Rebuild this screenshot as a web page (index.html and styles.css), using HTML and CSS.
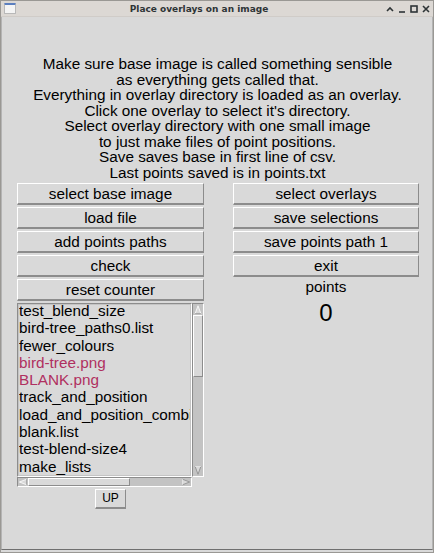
FILE: index.html
```html
<!DOCTYPE html>
<html>
<head>
<meta charset="utf-8">
<link rel="stylesheet" href="styles.css">
</head>
<body>
<div class="window">
  <div class="titlebar">
    <span class="appicon"></span>
    <span class="title">Place overlays on an image</span>
    <span class="controls">
      <svg width="10" height="10" viewBox="0 0 10 10"><path d="M2 7 L5 4 L8 7" fill="none" stroke="#2e3436" stroke-width="1.6"/></svg>
      <svg width="10" height="10" viewBox="0 0 10 10"><path d="M2 8 H8" stroke="#2e3436" stroke-width="1.6"/></svg>
      <svg width="10" height="10" viewBox="0 0 10 10"><rect x="2" y="2" width="6" height="6" fill="none" stroke="#2e3436" stroke-width="1.6"/></svg>
      <svg width="10" height="10" viewBox="0 0 10 10"><path d="M2 2 L8 8 M8 2 L2 8" stroke="#2e3436" stroke-width="1.6"/></svg>
    </span>
  </div>
  <div class="content">
    <div class="desc">Make sure base image is called something sensible<br>as everything gets called that.<br>Everything in overlay directory is loaded as an overlay.<br>Click one overlay to select it's directory.<br>Select overlay directory with one small image<br>to just make files of point positions.<br>Save saves base in first line of csv.<br>Last points saved is in points.txt</div>
    <div class="grid">
      <div class="col">
        <div class="btn">select base image</div>
        <div class="btn">load file</div>
        <div class="btn">add points paths</div>
        <div class="btn">check</div>
        <div class="btn">reset counter</div>
        <div class="listwrap">
          <div class="listrow">
            <div class="listbox">
              <div class="items">
                <div class="item">test_blend_size</div>
                <div class="item">bird-tree_paths0.list</div>
                <div class="item">fewer_colours</div>
                <div class="item red">bird-tree.png</div>
                <div class="item red">BLANK.png</div>
                <div class="item">track_and_position</div>
                <div class="item">load_and_position_combi</div>
                <div class="item">blank.list</div>
                <div class="item">test-blend-size4</div>
                <div class="item">make_lists</div>
              </div>
            </div>
            <div class="vscroll">
              <svg class="arrow" width="12" height="12" viewBox="0 0 12 12"><path d="M2.5 11 L6 1.5 L9.5 11 Z" fill="#d9d9d9" stroke="#fff" stroke-width="1"/><path d="M9.5 11 H2.5" stroke="#8c8c8c"/></svg>
              <div class="vthumb"></div>
              <div class="vtrough"></div>
              <svg class="arrow" width="12" height="12" viewBox="0 0 12 12"><path d="M2.5 1 L6 10.5 L9.5 1 Z" fill="#d9d9d9" stroke="#8c8c8c" stroke-width="1"/><path d="M2.5 1 H9.5" stroke="#fff"/></svg>
            </div>
          </div>
          <div class="hscroll">
            <svg class="harrow" width="11" height="10" viewBox="0 0 11 10"><path d="M10 1.5 L1 5 L10 8.5 Z" fill="#d9d9d9" stroke="#fff" stroke-width="1"/><path d="M10 1.5 V8.5" stroke="#8c8c8c"/></svg>
            <div class="hthumb"></div>
            <div class="htrough"></div>
            <svg class="harrow" width="11" height="10" viewBox="0 0 11 10"><path d="M1 1.5 L10 5 L1 8.5 Z" fill="#d9d9d9" stroke="#8c8c8c" stroke-width="1"/><path d="M1 1.5 V8.5" stroke="#fff"/></svg>
          </div>
        </div>
        <div class="upwrap"><div class="btn up">UP</div></div>
      </div>
      <div class="col">
        <div class="btn">select overlays</div>
        <div class="btn">save selections</div>
        <div class="btn">save points path 1</div>
        <div class="btn">exit</div>
        <div class="plabel">points</div>
        <div class="pval">0</div>
      </div>
    </div>
  </div>
</div>
</body>
</html>
```

FILE: styles.css
```css
html, body {
  margin: 0;
  padding: 0;
  background: #d9d9d9;
}
.window {
  width: 434px;
  height: 553px;
  box-sizing: border-box;
  border: 1px solid #9a9894;
  background: #d9d9d9;
  display: flex;
  flex-direction: column;
  font-family: "Liberation Sans", Arial, sans-serif;
  color: #000;
}
.titlebar {
  height: 15px;
  background: #dcd8d4;
  display: flex;
  align-items: center;
  position: relative;
  border-bottom: 1px solid #d0ccc8;
}
.appicon {
  width: 10px;
  height: 8px;
  margin-left: 3px;
  border: 1px solid #b8b8b8;
  border-top: 2px solid #5b7fbf;
  background: #f4f4f4;
  border-radius: 1px;
}
.title {
  position: absolute;
  left: 0;
  right: 0;
  text-align: center;
  font-family: "DejaVu Sans", sans-serif;
  font-weight: bold;
  font-size: 9px;
  color: #2e3436;
  padding-right: 36px;
}
.controls {
  margin-left: auto;
  margin-right: 2px;
  display: flex;
  gap: 2px;
}
.content {
  flex: 1;
  border-left: 1px solid #b4b4b4;
  border-right: 1px solid #b4b4b4;
  border-bottom: 1px solid #6f6f6f;
  margin-bottom: 2px;
}
.desc {
  margin-top: 39px;
  text-align: center;
  font-size: 15.3px;
  line-height: 15.5px;
  padding-left: 1px;
}
.grid {
  display: grid;
  grid-template-columns: 187px 186px;
  column-gap: 29px;
  padding-left: 15px;
  margin-top: 3px;
}
.col {
  display: flex;
  flex-direction: column;
}
.btn {
  height: 22px;
  box-sizing: border-box;
  margin-bottom: 2px;
  border-top: 1px solid #ffffff;
  border-left: 1px solid #ffffff;
  border-right: 1px solid #8c8c8c;
  border-bottom: 2px solid #8c8c8c;
  background: #d9d9d9;
  text-align: center;
  font-size: 15.3px;
  line-height: 19px;
}
.listwrap {
  display: flex;
  flex-direction: column;
}
.listrow {
  display: flex;
  height: 174px;
}
.listbox {
  width: 175px;
  box-sizing: border-box;
  border-top: 1px solid #8c8c8c;
  border-left: 1px solid #8c8c8c;
  border-right: 1px solid #ffffff;
  border-bottom: 1px solid #ffffff;
  outline: 1px solid #c4c4c4;
  outline-offset: -2px;
  overflow: hidden;
  padding-left: 1px;
  font-size: 15.3px;
  line-height: 17.3px;
  white-space: nowrap;
}
.items {
  margin-top: -2px;
}
.item.red {
  color: #b03060;
}
.vscroll {
  width: 12px;
  box-sizing: border-box;
  background: #c3c3c3;
  border-top: 1px solid #8c8c8c;
  border-left: 1px solid #8c8c8c;
  border-right: 1px solid #fff;
  border-bottom: 1px solid #fff;
  display: flex;
  flex-direction: column;
}
.vscroll .arrow {
  width: 10px;
  height: 11px;
  flex: none;
}
.vthumb {
  height: 62px;
  box-sizing: border-box;
  background: #d9d9d9;
  border-top: 1px solid #fff;
  border-left: 1px solid #fff;
  border-right: 1px solid #8c8c8c;
  border-bottom: 1px solid #8c8c8c;
}
.vtrough {
  flex: 1;
}
.hscroll {
  width: 175px;
  height: 10px;
  box-sizing: border-box;
  background: #c3c3c3;
  border-top: 1px solid #8c8c8c;
  border-left: 1px solid #8c8c8c;
  border-right: 1px solid #fff;
  border-bottom: 1px solid #fff;
  display: flex;
}
.hscroll .harrow {
  width: 10px;
  height: 8px;
  flex: none;
}
.hthumb {
  width: 102px;
  box-sizing: border-box;
  background: #d9d9d9;
  border-top: 1px solid #fff;
  border-left: 1px solid #fff;
  border-right: 1px solid #8c8c8c;
  border-bottom: 1px solid #8c8c8c;
}
.htrough {
  flex: 1;
}
.upwrap {
  display: flex;
  justify-content: center;
  margin-top: 2px;
}
.btn.up {
  width: 31px;
  height: 20px;
  font-size: 12px;
  line-height: 17px;
  margin: 0;
}
.plabel {
  text-align: center;
  font-size: 15.3px;
  line-height: 16px;
}
.pval {
  text-align: center;
  font-size: 24px;
  line-height: 36px;
}
```
